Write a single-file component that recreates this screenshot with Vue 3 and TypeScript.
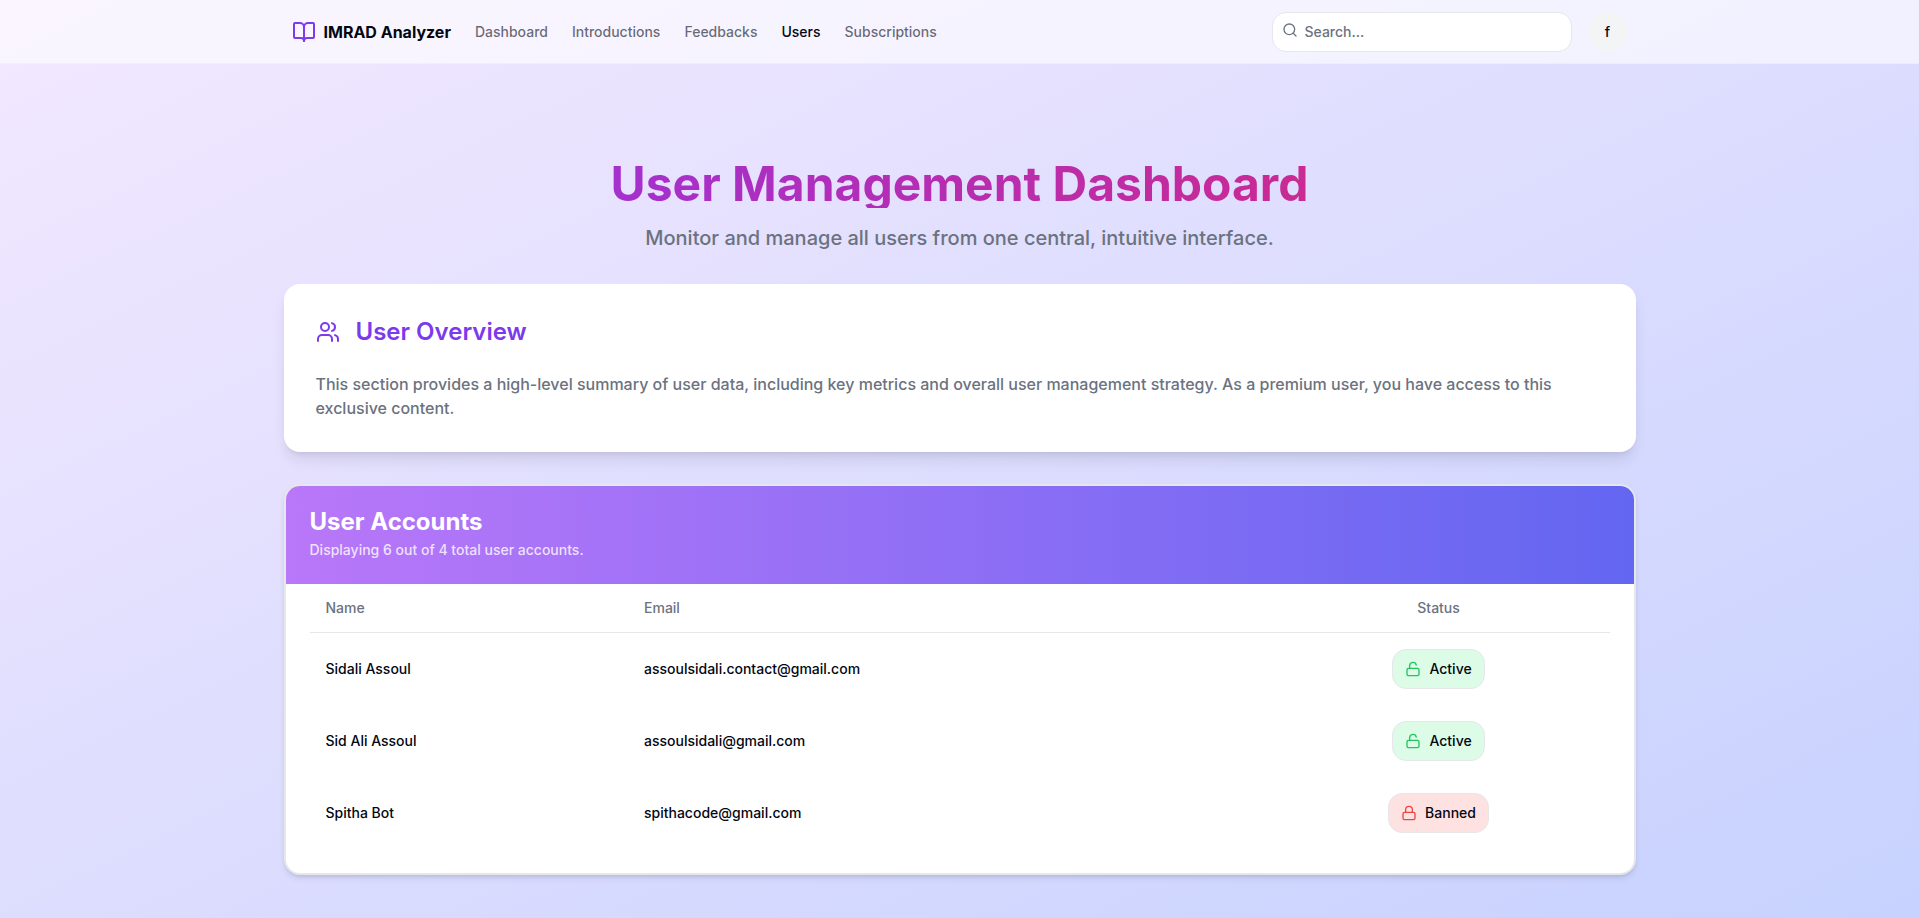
<script setup lang="ts">
interface NavItem {
  label: string
  active?: boolean
}

interface Account {
  name: string
  email: string
  status: 'Active' | 'Banned'
}

const navItems: NavItem[] = [
  { label: 'Dashboard' },
  { label: 'Introductions' },
  { label: 'Feedbacks' },
  { label: 'Users', active: true },
  { label: 'Subscriptions' },
]

const accounts: Account[] = [
  { name: 'Sidali Assoul', email: 'assoulsidali.contact@gmail.com', status: 'Active' },
  { name: 'Sid Ali Assoul', email: 'assoulsidali@gmail.com', status: 'Active' },
  { name: 'Spitha Bot', email: 'spithacode@gmail.com', status: 'Banned' },
]
</script>

<template>
  <div class="page">
    <header class="topbar">
      <div class="topbar-inner">
        <a href="#" class="brand">
          <svg class="icon brand-icon" viewBox="0 0 24 24" aria-hidden="true">
            <path d="M12 7v14" />
            <path d="M3 18a1 1 0 0 1-1-1V4a1 1 0 0 1 1-1h5a4 4 0 0 1 4 4 4 4 0 0 1 4-4h5a1 1 0 0 1 1 1v13a1 1 0 0 1-1 1h-6a3 3 0 0 0-3 3 3 3 0 0 0-3-3z" />
          </svg>
          <span>IMRAD Analyzer</span>
        </a>
        <nav class="nav">
          <a
            v-for="item in navItems"
            :key="item.label"
            href="#"
            class="nav-link"
            :class="{ active: item.active }"
            :aria-current="item.active ? 'page' : undefined"
          >{{ item.label }}</a>
        </nav>
        <form class="search" role="search" @submit.prevent>
          <svg class="icon search-icon" viewBox="0 0 24 24" aria-hidden="true">
            <circle cx="11" cy="11" r="8" />
            <path d="m21 21-4.3-4.3" />
          </svg>
          <input type="search" class="search-input" placeholder="Search..." aria-label="Search" />
        </form>
        <button type="button" class="avatar" aria-label="Account menu">f</button>
      </div>
    </header>

    <main class="content">
      <div class="intro">
        <h1 class="title">User Management Dashboard</h1>
        <p class="subtitle">Monitor and manage all users from one central, intuitive interface.</p>
      </div>

      <section class="overview">
        <h2 class="overview-title">
          <svg class="icon overview-icon" viewBox="0 0 24 24" aria-hidden="true">
            <path d="M16 21v-2a4 4 0 0 0-4-4H6a4 4 0 0 0-4 4v2" />
            <circle cx="9" cy="7" r="4" />
            <path d="M22 21v-2a4 4 0 0 0-3-3.87" />
            <path d="M16 3.13a4 4 0 0 1 0 7.75" />
          </svg>
          <span>User Overview</span>
        </h2>
        <p class="overview-text">
          This section provides a high-level summary of user data, including key metrics and overall
          user management strategy. As a premium user, you have access to this exclusive content.
        </p>
      </section>

      <section class="accounts">
        <div class="accounts-head">
          <h2 class="accounts-title">User Accounts</h2>
          <p class="accounts-sub">Displaying 6 out of 4 total user accounts.</p>
        </div>
        <div class="accounts-body">
          <table class="table">
            <thead>
              <tr>
                <th class="col-name" scope="col">Name</th>
                <th class="col-email" scope="col">Email</th>
                <th class="col-status" scope="col">Status</th>
              </tr>
            </thead>
            <tbody>
              <tr v-for="account in accounts" :key="account.email">
                <td>{{ account.name }}</td>
                <td>{{ account.email }}</td>
                <td class="col-status">
                  <button type="button" class="status" :class="account.status.toLowerCase()">
                    <svg class="icon status-icon" viewBox="0 0 24 24" aria-hidden="true">
                      <rect x="3" y="11" width="18" height="11" rx="2" />
                      <path v-if="account.status === 'Active'" d="M7 11V7a5 5 0 0 1 9.9-1" />
                      <path v-else d="M7 11V7a5 5 0 0 1 10 0v4" />
                    </svg>
                    <span>{{ account.status }}</span>
                  </button>
                </td>
              </tr>
            </tbody>
          </table>
        </div>
      </section>
    </main>
  </div>
</template>

<style>
body {
  margin: 0;
}
</style>

<style scoped>
.page {
  box-sizing: border-box;
  min-height: 100vh;
  background: linear-gradient(to bottom right, #f3e8ff, #c7d2fe);
  color: #030712;
  font-family: Inter, "Liberation Sans", sans-serif;
  font-size: 14px;
  font-weight: 500;
  line-height: 20px;
}

.page *,
.page *::before {
  box-sizing: border-box;
}

h1,
h2,
p {
  margin: 0;
}

a {
  color: inherit;
  text-decoration: none;
}

button,
input {
  font: inherit;
  color: inherit;
}

.icon {
  flex: none;
  fill: none;
  stroke: currentColor;
  stroke-width: 2;
  stroke-linecap: round;
  stroke-linejoin: round;
}

.topbar {
  border-bottom: 1px solid rgba(229, 231, 235, 0.4);
  background: rgba(255, 255, 255, 0.6);
}

.topbar-inner {
  display: flex;
  align-items: center;
  max-width: 1352px;
  height: 63px;
  margin: 0 auto;
  padding: 0 8px;
}

.brand {
  display: flex;
  align-items: center;
  gap: 8px;
  margin-right: 24px;
  font-size: 16px;
  line-height: 24px;
  font-weight: 700;
}

.brand-icon {
  width: 24px;
  height: 24px;
  color: #7c3aed;
}

.nav {
  display: flex;
  gap: 24px;
}

.nav-link {
  color: rgba(3, 7, 18, 0.6);
}

.nav-link.active {
  color: #030712;
}

.search {
  position: relative;
  width: 300px;
  margin-left: auto;
}

.search-icon {
  position: absolute;
  top: 10px;
  left: 10px;
  width: 16px;
  height: 16px;
  color: #6b7280;
}

.search-input {
  display: block;
  width: 100%;
  height: 40px;
  padding: 8px 12px 8px 32px;
  border: 1px solid #e5e7eb;
  border-radius: 14px;
  background: #fff;
  appearance: none;
  outline: none;
}

.search-input::placeholder {
  color: #6b7280;
  opacity: 1;
}

.avatar {
  width: 40px;
  height: 40px;
  margin-left: 16px;
  padding: 0;
  border: 0;
  border-radius: 50%;
  background: #f3f4f6;
  cursor: pointer;
}

.content {
  display: flex;
  flex-direction: column;
  gap: 32px;
  max-width: 1352px;
  margin: 0 auto;
  padding: 96px 0 43px;
}

.intro {
  display: flex;
  flex-direction: column;
  gap: 16px;
  text-align: center;
}

.title {
  background: linear-gradient(to right, #9333ea, #db2777);
  background-clip: text;
  -webkit-background-clip: text;
  color: transparent;
  font-size: 48px;
  line-height: 48px;
  font-weight: 700;
}

.subtitle {
  color: #6b7280;
  font-size: 20px;
  line-height: 28px;
}

.overview {
  padding: 32px;
  border-radius: 16px;
  background: #fff;
  box-shadow: 0 10px 15px -3px rgba(0, 0, 0, 0.1), 0 4px 6px -4px rgba(0, 0, 0, 0.1);
}

.overview-title {
  display: flex;
  align-items: center;
  gap: 16px;
  color: #7c3aed;
  font-size: 24px;
  line-height: 32px;
  font-weight: 600;
}

.overview-icon {
  width: 24px;
  height: 24px;
}

.overview-text {
  margin-top: 24px;
  color: #6b7280;
  font-size: 16px;
  line-height: 24px;
}

.accounts {
  overflow: hidden;
  border: 2px solid #e5e7eb;
  border-radius: 16px;
  background: #fff;
  box-shadow: 0 4px 6px -1px rgba(0, 0, 0, 0.1), 0 2px 4px -2px rgba(0, 0, 0, 0.1);
}

.accounts-head {
  display: flex;
  flex-direction: column;
  gap: 6px;
  padding: 24px;
  background: linear-gradient(to right, #b977f9, #6366f1);
  color: #fff;
}

.accounts-title {
  font-size: 24px;
  line-height: 24px;
  font-weight: 700;
}

.accounts-sub {
  color: rgba(255, 255, 255, 0.8);
}

.accounts-body {
  padding: 0 24px 24px;
}

.table {
  width: 100%;
  table-layout: fixed;
  border-collapse: separate;
  border-spacing: 0;
}

.table th {
  height: 49px;
  padding: 0 16px;
  border-bottom: 1px solid #e5e7eb;
  color: #6b7280;
  font-weight: 500;
  text-align: left;
}

.table td {
  padding: 16px;
}

.col-name {
  width: 24.5%;
}

.col-email {
  width: 49.2%;
}

.table .col-status {
  text-align: center;
}

.status {
  display: inline-flex;
  align-items: center;
  gap: 8px;
  height: 40px;
  padding: 0 12px;
  border: 1px solid #e5e7eb;
  border-radius: 14px;
  vertical-align: top;
  cursor: pointer;
}

.status-icon {
  width: 16px;
  height: 16px;
}

.status.active {
  background: #dcfce7;
}

.status.active .status-icon {
  color: #22c55e;
}

.status.banned {
  background: #fee2e2;
}

.status.banned .status-icon {
  color: #ef4444;
}
</style>
